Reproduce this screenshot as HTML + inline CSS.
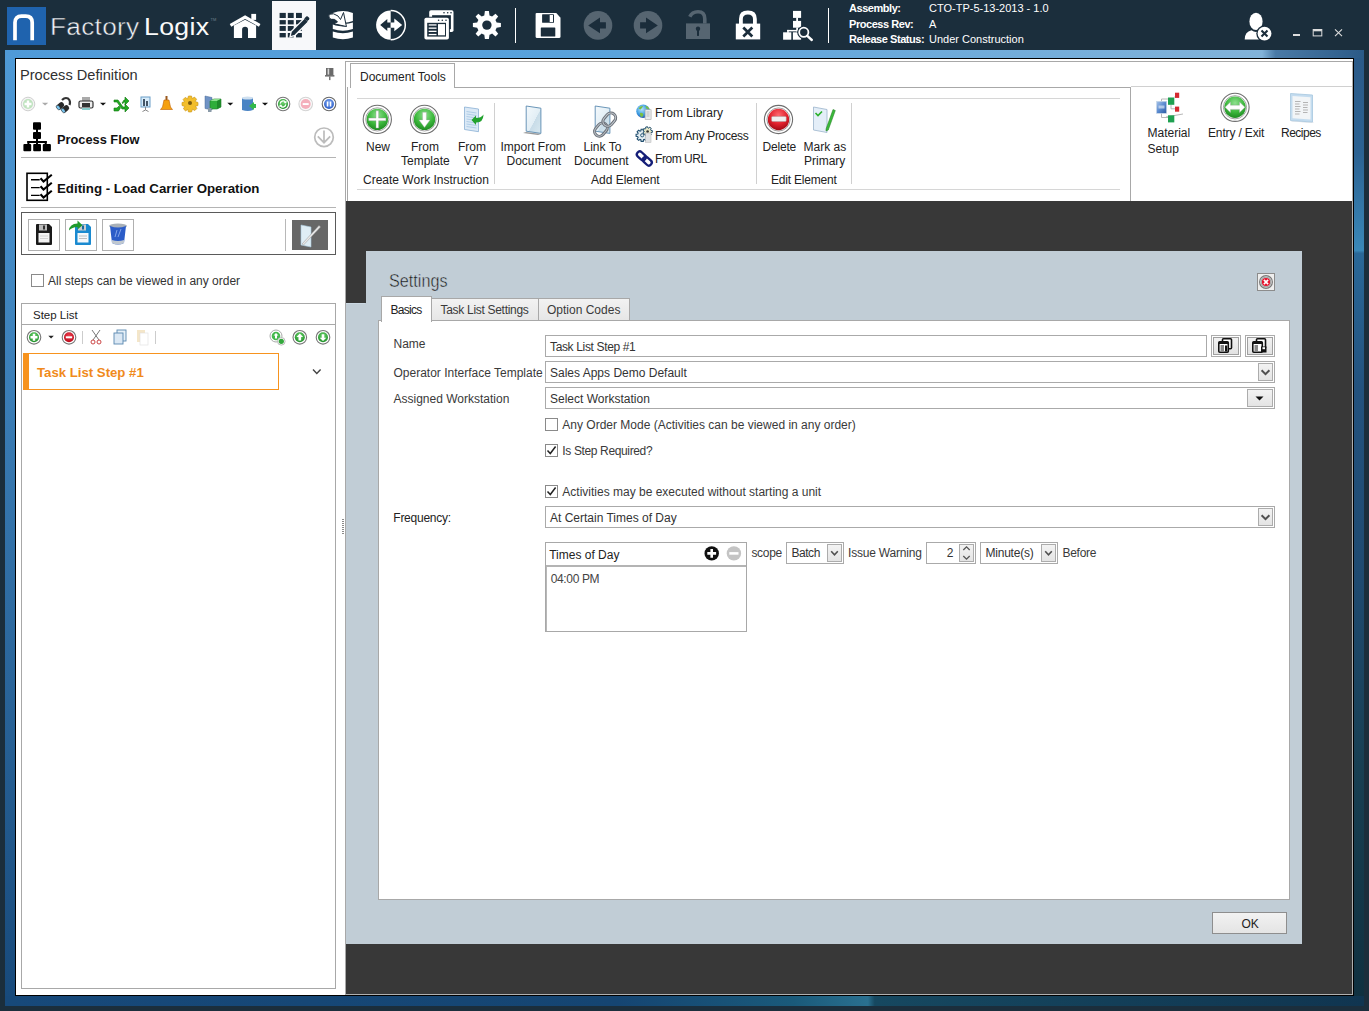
<!DOCTYPE html>
<html><head><meta charset="utf-8">
<style>
*{box-sizing:border-box}
html,body{margin:0;padding:0;width:1369px;height:1011px;overflow:hidden;background:#1b2e3c;font-family:"Liberation Sans",sans-serif;position:relative}
.a{position:absolute}
.t{position:absolute;white-space:nowrap;line-height:1}
.hd{color:#fff;font-size:11px}
.hd b{font-weight:700;letter-spacing:-0.45px}
.f12{font-size:12px;color:#333}
.lbl{font-size:12px;color:#3a3a3a}
.box{position:absolute;border:1px solid #aaa;background:#fff}
.cb{position:absolute;width:13px;height:13px;border:1px solid #8a8a8a;background:#fff}
.dd{position:absolute;border:1px solid #acacac;background:linear-gradient(#f3f3f3,#e4e4e4)}
</style></head><body>

<!-- ===== top bar ===== -->
<div class="a" style="left:7px;top:7px;width:39px;height:38px;background:#1f63ae"></div>
<svg class="a" style="left:7px;top:7px" width="39" height="38"><path d="M8 33.2 V15.5 Q8 9.1 14.5 9.1 H18.7 Q25.2 9.1 25.2 15.5 V33.2" fill="none" stroke="#fff" stroke-width="3.7"/></svg>
<div class="t" style="left:50px;top:15.5px;font-size:23px;color:#eef2f4;letter-spacing:0.25px;-webkit-text-stroke:0.45px #1b2d3b;transform:scaleX(1.14);transform-origin:0 0">Factory</div><div class="t" style="left:143.7px;top:15.5px;font-size:23px;color:#fafafa;letter-spacing:0.3px;transform:scaleX(1.16);transform-origin:0 0">Logix</div><div class="t" style="left:210.5px;top:17.5px;font-size:4px;color:#71818c">TM</div>

<div class="a" style="left:272px;top:1px;width:44px;height:49px;background:#f7f8fa"></div>


<!-- ===== top bar icons ===== -->
<svg class="a" style="left:220px;top:0" width="620" height="50" viewBox="220 0 620 50">
 <!-- home -->
 <path d="M233.9 25.5 L245.1 19.8 L256.1 25.5 V38 H248 V29.5 Q248 26.7 245.1 26.7 Q242.1 26.7 242.1 29.5 V38 H233.9z" fill="#fff"/>
 <path d="M230.5 25.3 L245.1 17.2 L259.7 25.3" fill="none" stroke="#fff" stroke-width="3.2" stroke-linejoin="miter"/>
 <rect x="251.3" y="13.9" width="4.8" height="6" fill="#fff"/>
 <!-- grid + pencil -->
 <g fill="#1b2d3b">
  <rect x="279.6" y="12.9" width="6.2" height="5.1"/><rect x="287.8" y="12.9" width="5.9" height="5.1"/><rect x="296" y="12.9" width="5.9" height="5.1"/>
  <rect x="279.6" y="20.1" width="6.2" height="4.3"/><rect x="287.8" y="20.1" width="5.9" height="4.3"/><rect x="296" y="20.1" width="5.9" height="4.3"/>
  <rect x="279.6" y="26" width="6.2" height="4.9"/><rect x="287.8" y="26" width="5.9" height="4.9"/><rect x="296" y="26" width="5.9" height="4.9"/>
  <rect x="279.6" y="33" width="6.2" height="4.4"/><rect x="287.8" y="33" width="5.9" height="4.4"/><rect x="296" y="33" width="5.9" height="4.4"/>
 </g>
 <path d="M290 36.8 L291.2 31.5 L304.8 17.9 L308.6 21.7 L295 35.3z" fill="#1b2d3b" stroke="#f7f8fa" stroke-width="1.3"/>
 <path d="M304.3 18.4 L306.2 16.5 Q307 15.8 307.8 16.5 L309.1 17.8 Q309.8 18.6 309.1 19.4 L307.2 21.3z" fill="#1b2d3b"/>
 <!-- db with arrow -->
 <path d="M332.8 13 Q342.9 9 352.9 13 V21 Q345 24 340 22 L332.8 14.5z" fill="#fff"/>
 <path d="M332.8 24.5 Q338 26.5 347 26.5 L344.5 24 Q349 23.5 352.9 22.5 V29 Q342.9 32.5 332.8 29z" fill="#fff"/>
 <path d="M332.8 31.5 Q342.9 35 352.9 31.5 V37.5 Q342.9 41 332.8 37.5z" fill="#fff"/>
 <path d="M329 14.3 Q333.5 12.5 338 16 L340.5 19.5 L343.5 12.5 L346.4 26.5 L334 23.8 L337.5 21.8 Q334.5 18.2 331 19.3 Q328 18 329 14.3z" fill="#fff" stroke="#1b2d3b" stroke-width="1"/>
 <!-- circle arrows -->
 <path d="M390.7 10.5 A14.6 14.6 0 0 0 390.7 39.7z" fill="#fff"/>
 <path d="M390.7 10.5 A14.6 14.6 0 0 1 390.7 39.7" fill="none" stroke="#fff" stroke-width="1.5"/>
 <path d="M380.2 25.1 L387.3 19.1 V22.4 H390.7 V27.7 H387.3 V31z" fill="#1b2d3b"/>
 <path d="M402.2 25.1 L394.3 18.5 V22.4 H390.7 V27.7 H394.3 V31.3z" fill="#fff"/>
 <!-- windows -->
 <rect x="429.2" y="10.3" width="24.3" height="21.7" rx="1.8" fill="#fff"/>
 <rect x="432.1" y="15.2" width="18.8" height="14" fill="#1b2d3b"/>
 <g fill="#1b2d3b"><circle cx="444" cy="12.8" r="0.8"/><circle cx="447.7" cy="12.8" r="0.8"/><circle cx="451" cy="12.8" r="0.8"/></g>
 <rect x="423.4" y="16.7" width="26.5" height="23.8" rx="2" fill="#1b2d3b"/>
 <rect x="424.4" y="17.7" width="24.5" height="21.8" rx="1.8" fill="#fff"/>
 <rect x="427.2" y="22.8" width="18.8" height="13.8" fill="#1b2d3b"/>
 <g fill="#1b2d3b"><circle cx="438.6" cy="20.2" r="0.8"/><circle cx="442.3" cy="20.2" r="0.8"/><circle cx="446" cy="20.2" r="0.8"/></g>
 <g fill="#fff"><rect x="428.7" y="24.3" width="7.8" height="1.3"/><rect x="428.7" y="27.5" width="7.8" height="1.3"/><rect x="428.7" y="30.7" width="7.8" height="1.3"/><rect x="428.7" y="33.9" width="7.8" height="1.3"/><rect x="438" y="24.1" width="7" height="11.2"/></g>
 <!-- gear -->
 <g transform="translate(486.9 25.1)">
  <path id="gearP" d="M-2 -14 H2 L2.6 -9.7 A10 10 0 0 1 5.2 -8.5 L8.6 -11.3 L11.3 -8.6 L8.5 -5.2 A10 10 0 0 1 9.7 -2.6 L14 -2 V2 L9.7 2.6 A10 10 0 0 1 8.5 5.2 L11.3 8.6 L8.6 11.3 L5.2 8.5 A10 10 0 0 1 2.6 9.7 L2 14 H-2 L-2.6 9.7 A10 10 0 0 1 -5.2 8.5 L-8.6 11.3 L-11.3 8.6 L-8.5 5.2 A10 10 0 0 1 -9.7 2.6 L-14 2 V-2 L-9.7 -2.6 A10 10 0 0 1 -8.5 -5.2 L-11.3 -8.6 L-8.6 -11.3 L-5.2 -8.5 A10 10 0 0 1 -2.6 -9.7z" fill="#fff"/>
  <circle r="4.7" fill="#1b2d3b"/>
 </g>
 <rect x="515" y="8" width="1" height="35" fill="#fff"/>
 <!-- floppy -->
 <path d="M535.6 14 Q535.6 12.9 536.7 12.9 H556.3 L560.5 17.8 V36.8 Q560.5 37.9 559.4 37.9 H536.7 Q535.6 37.9 535.6 36.8z" fill="#fff"/>
 <rect x="542.1" y="14.2" width="11.9" height="8.6" rx="0.6" fill="#1b2d3b"/>
 <rect x="549.7" y="15" width="3.3" height="7" fill="#fff"/>
 <rect x="540.8" y="27.4" width="14.5" height="9.2" rx="0.6" fill="#1b2d3b"/>
 <!-- back / forward -->
 <circle cx="598" cy="25.4" r="14.3" fill="#566571"/>
 <path d="M588.2 25.4 L600 17.5 V22.3 H605.9 V28.4 H600 V33.3z" fill="#1b2d3b"/>
 <circle cx="648" cy="25.4" r="14.3" fill="#566571"/>
 <path d="M657.8 25.4 L646 17.5 V22.3 H640.1 V28.4 H646 V33.3z" fill="#1b2d3b"/>
 <!-- unlock -->
 <path d="M689.8 16.8 Q692 11.8 698 11.8 Q704.8 11.8 704.8 19 V23.5" fill="none" stroke="#566571" stroke-width="3.6"/>
 <rect x="686" y="23.4" width="24" height="15.6" fill="#566571"/>
 <circle cx="698" cy="28.8" r="2.2" fill="#1b2d3b"/><rect x="697" y="29" width="2" height="6.9" fill="#1b2d3b"/>
 <!-- lock x -->
 <path d="M740.9 24 V19 Q740.9 12.5 747.9 12.5 Q754.9 12.5 754.9 19 V24" fill="none" stroke="#fff" stroke-width="3.8"/>
 <rect x="735.8" y="23.6" width="24.4" height="15.8" fill="#fff"/>
 <path d="M743.3 27.5 L752.3 36.5 M752.3 27.5 L743.3 36.5" stroke="#1b2d3b" stroke-width="2.7"/>
 <!-- hierarchy search -->
 <g fill="#fff">
  <rect x="793" y="10.9" width="8.1" height="7"/><rect x="796.2" y="17.5" width="1.8" height="3.8"/><rect x="793" y="20.9" width="8.1" height="6.8"/>
  <rect x="796.2" y="27.5" width="1.8" height="4"/><rect x="787.2" y="29.9" width="10" height="1.5"/><rect x="787.2" y="29.9" width="1.5" height="3"/>
  <rect x="783.1" y="32.3" width="8.2" height="7.4"/><rect x="792.9" y="32.3" width="8.2" height="7.4"/>
 </g>
 <circle cx="803.8" cy="32.3" r="6.6" fill="#1b2d3b"/>
 <circle cx="803.8" cy="32.3" r="4.6" fill="none" stroke="#fff" stroke-width="1.8"/>
 <path d="M807.3 35.8 L811.8 40" stroke="#fff" stroke-width="2.4" stroke-linecap="round"/>
 <rect x="828" y="8" width="1" height="35" fill="#fff"/>
</svg>
<svg class="a" style="left:1240px;top:8px" width="110" height="36" viewBox="1240 8 110 36">
 <ellipse cx="1256" cy="21.4" rx="6.6" ry="8.7" fill="#fff"/>
 <path d="M1244.7 39.6 Q1244.7 31.8 1251.5 30.3 Q1256 33.5 1260.5 30.3 Q1263 30.8 1265 32 L1262 39.6z" fill="#fff"/>
 <circle cx="1264.5" cy="33.6" r="8.2" fill="#1b2d3b"/>
 <circle cx="1264.5" cy="33.6" r="6.9" fill="#fff"/>
 <path d="M1261.5 30.6l6 6M1267.5 30.6l-6 6" stroke="#1b2d3b" stroke-width="2.1"/>
 <rect x="1293" y="34" width="7" height="2" fill="#ddd"/>
 <rect x="1313.2" y="29.5" width="8.6" height="6.4" fill="none" stroke="#ddd" stroke-width="1"/>
 <rect x="1313.2" y="29.5" width="8.6" height="1.8" fill="#ddd"/>
 <path d="M1335 29.3l7 6.9M1342 29.3l-7 6.9" stroke="#ddd" stroke-width="1.1"/>
</svg>

<!-- header info -->
<div class="t hd" style="left:849px;top:2.7px"><b>Assembly:</b></div>
<div class="t hd" style="left:849px;top:18.8px"><b>Process Rev:</b></div>
<div class="t hd" style="left:849px;top:33.8px"><b>Release Status:</b></div>
<div class="t hd" style="left:929px;top:2.7px">CTO-TP-5-13-2013 - 1.0</div>
<div class="t hd" style="left:929px;top:18.8px">A</div>
<div class="t hd" style="left:929px;top:33.8px">Under Construction</div>

<!-- ===== window frame ===== -->
<div class="a" id="frame" style="left:5px;top:50px;width:1359px;height:956px;background:linear-gradient(#4f9bd8,#17497a)"></div>
<div class="a" style="left:5px;top:50px;width:1359px;height:8px;background:linear-gradient(90deg,#4f9ad8 0%,#5aa3dc 45%,#82b3d9 92.5%,#4a7aa6 93.5%,#2b5a87 100%)"></div>
<div class="a" style="left:1354px;top:58px;width:10px;height:948px;background:linear-gradient(#2b5a88 0%,#2c6292 10%,#3a88b8 20.3%,#2a6898 20.6%,#23527e 35%,#1f4a70 55%,#183f52 75%,#10303f 100%)"></div>
<div class="a" style="left:5px;top:996px;width:1359px;height:10px;background:linear-gradient(90deg,#17497a 0%,#154572 45%,#1a5a7a 58%,#2a7090 63.5%,#164860 64%,#103550 100%)"></div>
<div class="a" style="left:15px;top:58px;width:1339px;height:938px;border:1px solid #000;background:#fff"></div>

<!-- ===== dark workspace ===== -->
<div class="a" style="left:345px;top:61px;width:1px;height:934px;background:#a8a8a8"></div>
<div class="a" style="left:346px;top:201px;width:1007px;height:793px;background:#383838"></div>
<div class="a" style="left:346px;top:994px;width:1007px;height:1px;background:#b0b0b0"></div>
<div class="a" style="left:1352px;top:61px;width:1px;height:934px;background:#b0b0b0"></div>


<!-- ===== left panel ===== -->
<div class="t" style="left:20px;top:68px;font-size:14.6px;color:#303030">Process Definition</div>
<div class="t" style="left:57px;top:134px;font-size:12.8px;font-weight:700;color:#111">Process Flow</div>
<div class="a" style="left:21px;top:157px;width:315px;height:1px;background:#b4b4b4"></div>
<div class="t" style="left:57px;top:181.8px;font-size:13.3px;font-weight:700;color:#111">Editing - Load Carrier Operation</div>
<div class="a" style="left:21px;top:207px;width:315px;height:1px;background:#b4b4b4"></div>
<div class="a" style="left:21px;top:212px;width:315px;height:43px;border:1px solid #5a5a5a"></div>
<div class="a" style="left:28px;top:219px;width:32px;height:32px;border:1px solid #b0b0b0"></div>
<div class="a" style="left:65px;top:219px;width:32px;height:32px;border:1px solid #b0b0b0"></div>
<div class="a" style="left:102px;top:219px;width:32px;height:32px;border:1px solid #b0b0b0"></div>
<div class="a" style="left:285px;top:219px;width:1px;height:32px;background:#b8b8b8"></div>
<div class="a" style="left:292px;top:220px;width:36px;height:30px;background:#676767"></div>
<div class="cb" style="left:31px;top:274px"></div>
<div class="t" style="left:48px;top:275.4px;font-size:12px;color:#333">All steps can be viewed in any order</div>
<div class="a" style="left:21px;top:303px;width:315px;height:686px;border:1px solid #a8a8a8"></div>
<div class="a" style="left:22px;top:324px;width:313px;height:1px;background:#a8a8a8"></div>
<div class="t" style="left:33px;top:309.5px;font-size:11.5px;color:#222">Step List</div>
<div class="a" style="left:82px;top:331px;width:1px;height:13px;background:#ccc"></div>
<div class="a" style="left:155px;top:331px;width:1px;height:13px;background:#ccc"></div>
<div class="a" style="left:23px;top:353px;width:256px;height:37px;border:1px solid #f7931e;border-left:6px solid #f7931e"></div>
<div class="t" style="left:37px;top:366px;font-size:13.2px;font-weight:700;color:#f08a1c">Task List Step #1</div>
<svg class="a" style="left:0;top:0" width="346" height="540">
 <defs>
  <radialGradient id="gG" cx="50%" cy="35%" r="65%"><stop offset="0" stop-color="#6fd66f"/><stop offset="1" stop-color="#1e8f28"/></radialGradient>
  <radialGradient id="rG" cx="50%" cy="35%" r="65%"><stop offset="0" stop-color="#f04050"/><stop offset="1" stop-color="#b80818"/></radialGradient>
  <radialGradient id="bG" cx="50%" cy="35%" r="65%"><stop offset="0" stop-color="#7fa8f0"/><stop offset="1" stop-color="#2a5cc8"/></radialGradient>
 </defs>
 <!-- pin -->
 <rect x="326" y="68" width="7.4" height="7.2" fill="#6a6a6a"/><rect x="327.6" y="68.6" width="1.6" height="6" fill="#d8d8d8"/><rect x="325" y="75.2" width="9.4" height="1.3" fill="#555"/><rect x="329.2" y="76.5" width="1.2" height="3.6" fill="#555"/>
 <!-- toolbar row -->
 <circle cx="28" cy="104" r="6.8" fill="#f4f4f4" stroke="#cfcfcf" stroke-width="1"/>
 <circle cx="28" cy="104" r="5" fill="#bfe3bf"/>
 <path d="M26.8 100.5h2.4v2.3h2.3v2.4h-2.3v2.3h-2.4v-2.3h-2.3v-2.4h2.3z" fill="#fff"/>
 <path d="M42 102.8h6.2l-3.1 2.8z" fill="#aaa"/>
 <g transform="translate(56,97)">
  <path d="M6 3 Q9 0 12 1.5 Q15 4 13.5 8" fill="none" stroke="#333" stroke-width="2.2"/>
  <g transform="rotate(-40 4.5 9)"><rect x="0.5" y="6" width="8" height="5.5" rx="2.5" fill="#2a2a2a"/><ellipse cx="1.8" cy="8.75" rx="1.6" ry="2.6" fill="#7ac4ee" stroke="#222" stroke-width="0.5"/></g>
  <g transform="rotate(-40 9.5 12)"><rect x="5.5" y="9" width="8" height="5.5" rx="2.5" fill="#2a2a2a"/><ellipse cx="6.8" cy="11.75" rx="1.6" ry="2.6" fill="#7ac4ee" stroke="#222" stroke-width="0.5"/></g>
 </g>
 <g transform="translate(79,97)"><rect x="3" y="0" width="8" height="5" fill="#aaa"/><rect x="0" y="4" width="14" height="7" rx="1.5" fill="#eee" stroke="#333" stroke-width="1.2"/><rect x="3" y="6" width="8" height="4" fill="#333"/><rect x="3" y="11" width="8" height="2" fill="#8cc"/></g>
 <path d="M100 102.8h6l-3 2.8z" fill="#111"/>
 <g transform="translate(114,97)"><path d="M0 3h4l5 7h2v-3l4 4-4 4v-3h-3l-5-7h-3z M0 11h3l2-2 1.5 2-2 3h-4.5z M8 6l2-3h1v-3l4 4-4 4v-3h-1l-1 1.5z" fill="#22aa22" stroke="#117711" stroke-width="0.6"/></g>
 <g transform="translate(139,96)"><rect x="2" y="1" width="9" height="10" fill="#d8ecfa" stroke="#6a9ec8" stroke-width="1"/><rect x="4" y="3" width="2" height="7" fill="#456"/><rect x="7" y="5" width="2" height="5" fill="#456"/><path d="M6.5 11v3l-3 1.5M6.5 14l3 1.5" stroke="#888" fill="none"/></g>
 <g transform="translate(161,96)"><rect x="4.5" y="0" width="2" height="4" fill="#9a5a20"/><path d="M3 4h5l1.5 7 2 2.5h-12l2-2.5z" fill="#f5a010" stroke="#c06000" stroke-width="0.6"/></g>
 <g transform="translate(190,104)"><path d="M-1.5-8h3l.7 2.5 2.3-1.4 2.1 2.1-1.4 2.3L8-1.5v3l-2.5.7 1.4 2.3-2.1 2.1-2.3-1.4L1.5 8h-3l-.7-2.5-2.3 1.4-2.1-2.1 1.4-2.3L-8 1.5v-3l2.5-.7-1.4-2.3 2.1-2.1 2.3 1.4z" fill="#f2be2c" stroke="#c89010" stroke-width="0.6"/><circle cx="0" cy="-1" r="2" fill="#7a5a10"/></g>
 <g transform="translate(205,96)"><path d="M0 0 L7 1.5 V14 L0 12.5z" fill="#6f92c4" stroke="#4a6a98" stroke-width="0.5"/><path d="M5 5 L9 3 H16 V11 L12 13 H5z" fill="#2fae3a" stroke="#207a28" stroke-width="0.6"/><path d="M5 5 L9 3 H16 L12 5z" fill="#8fe08f"/><path d="M12 5 V13 L16 11 V3z" fill="#1f8a2a"/><rect x="3" y="12" width="3.5" height="4" fill="#8a9aa8"/></g>
 <path d="M227.3 102.8h6l-3 2.8z" fill="#111"/>
 <g transform="translate(242,96)"><path d="M0 2 Q6 0 11 2 V14 Q6 16 0 14z" fill="#4a84c4"/><ellipse cx="5.5" cy="2" rx="5.5" ry="1.6" fill="#cfe0f0"/><path d="M7 10l5-4v2h2v4h-2v2z" fill="#33b84a"/></g>
 <path d="M262 102.8h6l-3 2.8z" fill="#111"/>
 <circle cx="283" cy="104" r="6.8" fill="#fff" stroke="#777" stroke-width="1.1"/><circle cx="283" cy="104" r="5" fill="url(#gG)"/>
 <path d="M280.2 103.6 A2.9 2.9 0 0 1 285.3 102" fill="none" stroke="#fff" stroke-width="1.3"/><path d="M286.6 100.6 L286.4 103.6 L283.6 102.9z" fill="#fff"/><path d="M285.8 104.4 A2.9 2.9 0 0 1 280.7 106" fill="none" stroke="#fff" stroke-width="1.3"/><path d="M279.4 107.4 L279.6 104.4 L282.4 105.1z" fill="#fff"/>
 <circle cx="305.7" cy="104" r="6.8" fill="#fafafa" stroke="#d4d4d4" stroke-width="1.1"/><circle cx="305.7" cy="104" r="5" fill="#f4b0bc"/><rect x="302.7" y="103.1" width="6" height="1.9" fill="#fff"/>
 <circle cx="329" cy="104" r="6.8" fill="#fff" stroke="#666" stroke-width="1.1"/><circle cx="329" cy="104" r="5" fill="url(#bG)"/><rect x="326.8" y="101.5" width="1.5" height="5" fill="#fff"/><rect x="329.8" y="101.5" width="1.5" height="5" fill="#fff"/>
 <!-- hierarchy -->
 <g fill="#000"><rect x="33" y="122.3" width="8" height="7.5" rx="1"/><rect x="33" y="131.9" width="8" height="7" rx="1"/><rect x="36" y="129" width="2" height="3"/><rect x="36" y="138.5" width="2" height="5.5"/><rect x="27.4" y="141" width="19.3" height="2"/><rect x="27.4" y="141" width="2" height="3"/><rect x="44.7" y="141" width="2" height="3"/><rect x="23.4" y="143.9" width="7.8" height="7.3" rx="1"/><rect x="33.2" y="143.9" width="7.8" height="7.3" rx="1"/><rect x="42.8" y="143.9" width="8.1" height="7.3" rx="1"/></g>
 <!-- down arrow circle -->
 <circle cx="324" cy="137.3" r="9.3" fill="none" stroke="#bcbcbc" stroke-width="1.7"/>
 <path d="M324 130.5v12M317.8 136.3l6.2 6.4 6.2-6.4" fill="none" stroke="#bcbcbc" stroke-width="1.7"/>
 <!-- checklist -->
 <rect x="27" y="173.3" width="20.3" height="27" fill="none" stroke="#000" stroke-width="1.6"/>
 <path d="M31 179.7h8.7M31 187.6h8.7M31 195.4h8.7" stroke="#000" stroke-width="1.4"/>
 <path d="M40.5 178.3l3 3.2 8.3-6.8M40.5 186.3l3 3.2 8.3-6.8M40.5 194.3l3 3.2 8.3-6.8" fill="none" stroke="#000" stroke-width="2.1"/>
 <!-- floppy black -->
 <g transform="translate(36,224)"><path d="M0 1 Q0 0 1 0 H13 L16 3 V20 Q16 21 15 21 H1 Q0 21 0 20z" fill="#1a1a1a"/><rect x="3" y="0.5" width="8" height="6" fill="#bbb"/><rect x="7" y="1.5" width="2" height="4" fill="#333"/><rect x="2.5" y="9" width="11" height="9.5" fill="#f2f2f2"/><path d="M4 12h8M4 14.5h8" stroke="#bbb" stroke-width="0.6"/></g>
 <!-- floppy blue with arrow -->
 <g transform="translate(69,222)"><path d="M6 3 Q6 2 7 2 H19 L22 5 V22 Q22 23 21 23 H7 Q6 23 6 22z" fill="#1a8ad0"/><rect x="9" y="2.5" width="8" height="6" fill="#ccc"/><rect x="13" y="3.5" width="2" height="4" fill="#1a6aa0"/><rect x="8.5" y="11" width="11" height="9.5" fill="#f4f8fb"/><path d="M10 14h8M10 16.5h8" stroke="#999" stroke-width="0.6"/><path d="M0 8.5 Q0.5 1.8 8.5 1.5 V-1.5 L13.5 3.2 8.5 7.5 V5 Q3 5 0 8.5z" fill="#1f9a2c"/></g>
 <!-- trash -->
 <g transform="translate(109,223)"><ellipse cx="9" cy="3" rx="9" ry="2.5" fill="#a8b0b8"/><path d="M1 3 L3 20 Q9 23 15 20 L17 3 Q9 6 1 3z" fill="#2b5cc8"/><path d="M3 17 Q9 19 15 17 L15 20 Q9 23 3 20z" fill="#c0c8d0"/><path d="M8 7 L6 14 M12 6 L9 14" stroke="#9ab8f0" stroke-width="0.8"/></g>
 <!-- doc+pen -->
 <g transform="translate(300,223)"><path d="M1 2 L11 4 V24 L1 22z" fill="#dfeef6" stroke="#a8c8dc" stroke-width="0.6"/><path d="M2 21 L19 2.5 L20.5 4 L3.5 22z" fill="#e8e8e8" stroke="#999" stroke-width="0.5"/></g>
 <!-- step list icons -->
 <circle cx="34" cy="337.3" r="6.8" fill="#fff" stroke="#777" stroke-width="1.1"/><circle cx="34" cy="337.3" r="5" fill="url(#gG)"/><path d="M32.8 333.8h2.4v2.3h2.3v2.4h-2.3v2.3h-2.4v-2.3h-2.3v-2.4h2.3z" fill="#fff"/>
 <path d="M48.3 335.8h5.5l-2.75 2.6z" fill="#222"/>
 <circle cx="69" cy="337.3" r="6.8" fill="#fff" stroke="#777" stroke-width="1.1"/><circle cx="69" cy="337.3" r="5" fill="url(#rG)"/><rect x="65.8" y="336.3" width="6.4" height="2" fill="#fff"/>
 <g transform="translate(91,330)" stroke-width="1"><path d="M1 0 L8 10 M9 0 L2 10" stroke="#777" fill="none"/><circle cx="2" cy="12" r="2" fill="none" stroke="#c44"/><circle cx="8" cy="12" r="2" fill="none" stroke="#c44"/></g>
 <g transform="translate(113,330)"><rect x="4" y="0" width="9" height="11" fill="#e6f0f8" stroke="#5a88b0" stroke-width="0.9"/><rect x="1" y="3" width="9" height="11" fill="#dbe8f4" stroke="#5a88b0" stroke-width="0.9"/></g>
 <g transform="translate(137,329)" opacity="0.45"><rect x="0" y="1" width="8" height="12" fill="#e8c888"/><rect x="3" y="4" width="8" height="12" fill="#fff" stroke="#bbb" stroke-width="0.6"/></g>
 <g transform="translate(270,330)"><circle cx="6" cy="6" r="6" fill="#fff" stroke="#aaa" stroke-width="1"/><circle cx="6" cy="6" r="4.3" fill="#44b84c"/><path d="M6 3l2.5 2.5h-1.5v3h-2v-3h-1.5z" fill="#fff"/><circle cx="11.3" cy="11.3" r="3.8" fill="#fff" stroke="#aaa" stroke-width="0.8"/><circle cx="11.3" cy="11.3" r="2.6" fill="#33a83c"/></g>
 <circle cx="299.8" cy="337.3" r="6.8" fill="#fff" stroke="#777" stroke-width="1.1"/><circle cx="299.8" cy="337.3" r="5" fill="url(#gG)"/><path d="M299.8 333.6l3.3 3.3h-2v3.5h-2.6v-3.5h-2z" fill="#fff"/>
 <circle cx="323" cy="337.3" r="6.8" fill="#fff" stroke="#777" stroke-width="1.1"/><circle cx="323" cy="337.3" r="5" fill="url(#gG)"/><path d="M323 341l3.3-3.3h-2v-3.5h-2.6v3.5h-2z" fill="#fff"/>
 <!-- chevron -->
 <path d="M313 369.5l3.8 4 3.8-4" fill="none" stroke="#444" stroke-width="1.4"/>
 <!-- splitter grip -->
 <g fill="#8a8a8a"><rect x="342" y="519" width="2" height="1"/><rect x="342" y="521" width="2" height="1"/><rect x="342" y="523" width="2" height="1"/><rect x="342" y="525" width="2" height="1"/><rect x="342" y="527" width="2" height="1"/><rect x="342" y="529" width="2" height="1"/><rect x="342" y="531" width="2" height="1"/><rect x="342" y="533" width="2" height="1"/></g>
</svg>

<!-- ===== ribbon ===== -->
<div class="a" style="left:345px;top:61px;width:1008px;height:1px;background:#a8a8a8"></div>
<div class="a" style="left:347px;top:87px;width:784px;height:114px;border:1px solid #a8a8a8;border-bottom:none"></div>
<div class="a" style="left:350px;top:63px;width:105px;height:25px;border:1px solid #a8a8a8;border-bottom:none;background:#fff"></div>
<div class="a" style="left:348px;top:87px;width:2px;height:1px;background:#fff"></div>
<div class="t f12" style="left:360px;top:70.9px;color:#222">Document Tools</div>
<div class="a" style="left:1131px;top:86px;width:221px;height:1px;background:#d0d0d0"></div>
<div class="a" style="left:357px;top:98px;width:763px;height:1px;background:#d6d6d6"></div>
<div class="a" style="left:357px;top:189px;width:763px;height:1px;background:#d6d6d6"></div>
<div class="a" style="left:494px;top:103px;width:1px;height:81px;background:#d0d0d0"></div>
<div class="a" style="left:756px;top:103px;width:1px;height:81px;background:#d0d0d0"></div>
<div class="a" style="left:851px;top:103px;width:1px;height:81px;background:#d0d0d0"></div>
<div class="t f12" style="left:366px;top:140.8px;color:#222">New</div>
<div class="t f12" style="left:411px;top:140.6px;color:#222">From</div>
<div class="t f12" style="left:401px;top:155px;color:#222">Template</div>
<div class="t f12" style="left:458px;top:140.6px;color:#222">From</div>
<div class="t f12" style="left:464px;top:155px;color:#222">V7</div>
<div class="t f12" style="left:363px;top:174.2px;color:#222">Create Work Instruction</div>
<div class="t f12" style="left:500.5px;top:140.6px;color:#222">Import From</div>
<div class="t f12" style="left:506.5px;top:155px;color:#222">Document</div>
<div class="t f12" style="left:583.5px;top:140.6px;color:#222">Link To</div>
<div class="t f12" style="left:574px;top:155px;color:#222">Document</div>
<div class="t f12" style="left:655px;top:106.8px;color:#222">From Library</div>
<div class="t f12" style="left:655px;top:129.6px;color:#222;letter-spacing:-0.28px">From Any Process</div>
<div class="t f12" style="left:655px;top:153.2px;color:#222;letter-spacing:-0.45px">From URL</div>
<div class="t f12" style="left:591px;top:174.2px;color:#222">Add Element</div>
<div class="t f12" style="left:762.5px;top:141.2px;color:#222;letter-spacing:-0.2px">Delete</div>
<div class="t f12" style="left:803.5px;top:141.2px;color:#222">Mark as</div>
<div class="t f12" style="left:804px;top:154.8px;color:#222">Primary</div>
<div class="t f12" style="left:771px;top:174.2px;color:#222;letter-spacing:-0.2px">Edit Element</div>
<div class="t f12" style="left:1147.5px;top:126.8px;color:#222">Material</div>
<div class="t f12" style="left:1147.5px;top:142.6px;color:#222">Setup</div>
<div class="t f12" style="left:1208px;top:126.8px;color:#222;letter-spacing:-0.15px">Entry / Exit</div>
<div class="t f12" style="left:1281px;top:126.8px;color:#222;letter-spacing:-0.5px">Recipes</div>
<svg class="a" style="left:345px;top:88px" width="1000" height="112" viewBox="345 88 1000 112">
 <defs>
  <radialGradient id="gB" cx="50%" cy="30%" r="70%"><stop offset="0" stop-color="#8fe08f"/><stop offset="0.6" stop-color="#3cb83c"/><stop offset="1" stop-color="#1f8a22"/></radialGradient>
  <radialGradient id="rB" cx="50%" cy="30%" r="70%"><stop offset="0" stop-color="#ff6a70"/><stop offset="0.6" stop-color="#e0202c"/><stop offset="1" stop-color="#a00a14"/></radialGradient>
  <linearGradient id="docG" x1="0" y1="0" x2="1" y2="1"><stop offset="0" stop-color="#f4f9fc"/><stop offset="0.55" stop-color="#e2eef5"/><stop offset="0.56" stop-color="#c8dce8"/><stop offset="1" stop-color="#d8e8f0"/></linearGradient>
 </defs>
 <!-- New -->
 <circle cx="377.3" cy="119.4" r="14.1" fill="#fff" stroke="#6e6e6e" stroke-width="1.1"/>
 <circle cx="377.3" cy="119.4" r="11.6" fill="none" stroke="#8a8a8a" stroke-width="0.8"/>
 <circle cx="377.3" cy="119.4" r="10.7" fill="url(#gB)"/>
 <path d="M376 110.8h2.6v7.3h7.3v2.6h-7.3v7.3H376v-7.3h-7.3v-2.6H376z" fill="#fff" stroke="#9a9a9a" stroke-width="0.4"/>
 <!-- From Template -->
 <circle cx="424.5" cy="119.4" r="14.1" fill="#fff" stroke="#6e6e6e" stroke-width="1.1"/>
 <circle cx="424.5" cy="119.4" r="11.6" fill="none" stroke="#8a8a8a" stroke-width="0.8"/>
 <circle cx="424.5" cy="119.4" r="10.7" fill="url(#gB)"/>
 <path d="M422.6 112.3h3.8v7.6h3.6l-5.5 7.5-5.5-7.5h3.6z" fill="#fff" stroke="#aaa" stroke-width="0.4"/>
 <!-- V7 -->
 <path d="M464.5 107 L478.5 109 V131.7 L464.5 129.5z" fill="#dbe9f6" stroke="#8ab0d4" stroke-width="0.8"/>
 <path d="M466.5 111.5l10 1.5M466.5 114l10 1.5M466.5 116.5l10 1.5M466.5 119l10 1.5M466.5 121.5l10 1.5M466.5 124l10 1.5M466.5 126.5l10 1.5" stroke="#9cc0e0" stroke-width="0.7"/>
 <path d="M471.5 120 L476 115.5 V118 Q481 118 483.6 114.5 Q483 123 476 122.5 V125z" fill="#22a22e"/>
 <!-- Import -->
 <path d="M526.2 106 L540.9 108.2 V133.4 L526.2 131.2z" fill="url(#docG)" stroke="#5a8ab0" stroke-width="0.9"/>
 <path d="M526 132 L541 134 L538 135 L523 133z" fill="#555" opacity="0.6"/>
 <!-- Link -->
 <path d="M595.2 106 L609.9 108.2 V133.4 L595.2 131.2z" fill="url(#docG)" stroke="#5a8ab0" stroke-width="0.9"/>
 <g transform="rotate(-50 605.8 123.8)"><rect x="591" y="119" width="14.5" height="9.6" rx="4.8" fill="none" stroke="#6a7078" stroke-width="3"/><rect x="591" y="119" width="14.5" height="9.6" rx="4.8" fill="none" stroke="#b8bec4" stroke-width="1"/><rect x="604" y="119" width="14.5" height="9.6" rx="4.8" fill="none" stroke="#6a7078" stroke-width="3"/><rect x="604" y="119" width="14.5" height="9.6" rx="4.8" fill="none" stroke="#c0c6cc" stroke-width="1"/></g>
 <!-- globe -->
 <defs><radialGradient id="globeG" cx="40%" cy="35%" r="70%"><stop offset="0" stop-color="#b8e4fa"/><stop offset="0.6" stop-color="#3a9ae0"/><stop offset="1" stop-color="#2a4aa0"/></radialGradient></defs>
 <circle cx="643.1" cy="111.3" r="6.8" fill="url(#globeG)"/>
 <path d="M638.5 108.5 Q640 105.5 643 106 Q642 108.5 640.5 109.5z M640 113 Q642.5 112 643.5 114.5 Q643 117 641 117 Q639.5 115.5 640 113z M645.5 105.5 Q648.5 106.5 649.5 109 Q647.5 109.5 646 108z" fill="#7ac040"/>
 <rect x="645.1" y="109.7" width="6" height="9.7" fill="#e8eaec" stroke="#a8a8a8" stroke-width="0.6"/>
 <path d="M646.5 112h3M646.5 114h3M646.5 116h3" stroke="#aaa" stroke-width="0.7"/>
 <!-- gears -->
 <path d="M646.60 133.95 L648.30 134.21 L648.30 136.39 L646.60 136.65 L646.27 137.45 L647.29 138.85 L645.75 140.39 L644.35 139.37 L643.55 139.70 L643.29 141.40 L641.11 141.40 L640.85 139.70 L640.05 139.37 L638.65 140.39 L637.11 138.85 L638.13 137.45 L637.80 136.65 L636.10 136.39 L636.10 134.21 L637.80 133.95 L638.13 133.15 L637.11 131.75 L638.65 130.21 L640.05 131.23 L640.85 130.90 L641.11 129.20 L643.29 129.20 L643.55 130.90 L644.35 131.23 L645.75 130.21 L647.29 131.75 L646.27 133.15z" fill="#e4eef2" stroke="#1f4d6e" stroke-width="1.1"/>
 <circle cx="642.2" cy="135.3" r="1.6" fill="none" stroke="#1f4d6e" stroke-width="0.9"/>
 <path d="M650.90 130.33 L652.30 130.54 L652.30 132.46 L650.90 132.67 L650.57 133.35 L651.28 134.58 L649.78 135.78 L648.74 134.81 L648.01 134.98 L647.49 136.30 L645.61 135.87 L645.72 134.46 L645.14 133.99 L643.78 134.41 L642.95 132.67 L644.12 131.88 L644.12 131.12 L642.95 130.33 L643.78 128.59 L645.14 129.01 L645.72 128.54 L645.61 127.13 L647.49 126.70 L648.01 128.02 L648.74 128.19 L649.78 127.22 L651.28 128.42 L650.57 129.65z" fill="#e8e8c8" stroke="#1f4d6e" stroke-width="1"/>
 <circle cx="647.6" cy="131.5" r="1.3" fill="#333"/>
 <rect x="645.5" y="133" width="5.5" height="9.3" fill="#e0e2e4" stroke="#b0b0b0" stroke-width="0.5"/>
 <!-- url chain -->
 <g transform="rotate(42 644.3 158.5)" fill="none" stroke="#141e78" stroke-width="2.3"><rect x="635.3" y="155.6" width="10" height="5.8" rx="2.9"/><rect x="643.3" y="155.6" width="10" height="5.8" rx="2.9"/></g>
 <!-- Delete -->
 <circle cx="778.5" cy="119.5" r="14.1" fill="#fff" stroke="#6e6e6e" stroke-width="1.1"/>
 <circle cx="778.5" cy="119.5" r="11.6" fill="none" stroke="#8a8a8a" stroke-width="0.8"/>
 <circle cx="778.5" cy="119.5" r="10.7" fill="url(#rB)"/>
 <rect x="771.6" y="116.4" width="14.6" height="5.1" rx="1" fill="#f0f0f0" stroke="#999" stroke-width="0.4"/>
 <!-- Mark as primary -->
 <path d="M813.5 107 L827 109.5 V132.5 L813.5 130z" fill="#e4eef8" stroke="#9ab4cc" stroke-width="0.8"/>
 <path d="M815.5 113 l2.5 2.5 4-4" fill="none" stroke="#2ab02a" stroke-width="1.6"/>
 <path d="M826 129 L833 109.5 L835.3 110.5 L828.3 130 L826 131z" fill="#3ab83a" stroke="#1f7a1f" stroke-width="0.5"/>
 <!-- Material setup -->
 <path d="M1161.5 101 V99 H1168 M1174.3 97 H1176 M1171 104.8 V108.8 H1175 M1161.5 113.3 V117.5 H1168 M1166 117 L1183 114" fill="none" stroke="#b8b8b8" stroke-width="1"/>
 <defs><linearGradient id="mdG" x1="0" y1="0" x2="1" y2="1"><stop offset="0" stop-color="#a8c4e8"/><stop offset="0.5" stop-color="#5a8ad0"/><stop offset="1" stop-color="#2a5aa0"/></linearGradient></defs>
 <rect x="1156.5" y="101.3" width="10.1" height="12" fill="url(#mdG)" stroke="#c8d8e8" stroke-width="0.6"/>
 <rect x="1158.5" y="105.5" width="6" height="3" fill="#d8e4f4" opacity="0.7"/>
 <rect x="1168" y="97.5" width="6.3" height="7.3" fill="#1fa050"/>
 <rect x="1175" y="92.7" width="4.2" height="5.2" fill="#d42a30"/>
 <rect x="1175" y="106.6" width="4.2" height="5.1" fill="#d42a30"/>
 <rect x="1168" y="115.3" width="6.3" height="7.1" fill="#1fa050"/>
 <!-- Entry/Exit -->
 <circle cx="1235" cy="107.3" r="14.1" fill="#fff" stroke="#6e6e6e" stroke-width="1.1"/>
 <circle cx="1235" cy="107.3" r="11.6" fill="none" stroke="#8a8a8a" stroke-width="0.8"/>
 <circle cx="1235" cy="107.3" r="10.7" fill="url(#gB)"/>
 <path d="M1225 107.3 L1230.5 102 V105.2 H1239.5 V102 L1245 107.3 L1239.5 112.6 V109.4 H1230.5 V112.6z" fill="#fff" stroke="#aaa" stroke-width="0.4"/>
 <!-- Recipes -->
 <path d="M1290.5 93.5 L1312.5 95 V122 L1290.5 120.5z" fill="#c4dcef" stroke="#a6c6de" stroke-width="0.8"/>
 <path d="M1292.5 96 L1310.5 97.2 V119.5 L1292.5 118.3z" fill="#f2f5f7"/>
 <path d="M1295 101.5h5.5M1295 104h4.5M1295 106.5h5.5M1295 109h4.5M1295 111.5h5.5M1295 114h4.5M1303 102.5h5M1303 105h5M1303 107.5h4.5M1303 110h5M1303 112.5h4.5" stroke="#b4b4b4" stroke-width="1.2"/>
 <path d="M1291 121 L1313 122.5 L1314 123 L1292 121.5z" fill="#9ab" opacity="0.5"/>
</svg>

<!-- ===== dialog ===== -->
<div class="a" style="left:366px;top:251px;width:936px;height:693px;background:#c1cdd6"></div>
<div class="a" style="left:346px;top:303px;width:20px;height:641px;background:#c1cdd6"></div>
<div class="a" style="left:346px;top:303px;width:19px;height:1px;background:#cbd8e2"></div>
<div class="t" style="left:388.5px;top:273.4px;font-size:17.5px;color:#1a1a1a;-webkit-text-stroke:0.45px #c1cdd6;transform:scaleX(0.925);transform-origin:0 0">Settings</div>
<div class="a" style="left:1257px;top:273px;width:18px;height:18px;border:1px solid #8c8c8c;background:#eeeeee"></div>
<svg class="a" style="left:1257px;top:273px" width="18" height="18"><circle cx="9" cy="9" r="6.4" fill="#f4f4f4" stroke="#7a7a7a" stroke-width="1.2"/><circle cx="9" cy="9" r="4.9" fill="#e0e0e0" stroke="#8a8a8a" stroke-width="0.9"/><circle cx="9" cy="9" r="4.1" fill="#e8102a"/><path d="M6.9 6.9l4.2 4.2M11.1 6.9l-4.2 4.2" stroke="#fff" stroke-width="1.7"/></svg>
<div class="a" style="left:378px;top:320px;width:912px;height:580px;border:1px solid #a8a8a8;background:#fff"></div>
<div class="a" style="left:431px;top:298px;width:108px;height:23px;border:1px solid #a8a8a8;background:linear-gradient(#f2f2f2,#e6e6e6)"></div>
<div class="a" style="left:538px;top:298px;width:92px;height:23px;border:1px solid #a8a8a8;background:linear-gradient(#f2f2f2,#e6e6e6)"></div>
<div class="a" style="left:381px;top:296px;width:51px;height:26px;border:1px solid #a8a8a8;border-bottom:none;background:#fff"></div>
<div class="t lbl" style="left:390.5px;top:304px;color:#222;letter-spacing:-0.7px">Basics</div>
<div class="t lbl" style="left:440.5px;top:304px;letter-spacing:-0.3px">Task List Settings</div>
<div class="t lbl" style="left:547px;top:304px">Option Codes</div>

<div class="t lbl" style="left:393.5px;top:338.2px">Name</div>
<div class="box" style="left:545px;top:335px;width:662px;height:22px"></div>
<div class="t lbl" style="left:550px;top:340.5px;color:#333;letter-spacing:-0.35px">Task List Step #1</div>
<div class="a" style="left:1211px;top:335px;width:30px;height:22px;border:1px solid #acacac;background:#fff"></div>
<div class="a" style="left:1213px;top:337px;width:26px;height:18px;border:1px solid #a0a0a0;background:linear-gradient(#f2f2f2,#e2e2e2)"></div>
<div class="a" style="left:1245px;top:335px;width:30px;height:22px;border:1px solid #acacac;background:#fff"></div>
<div class="a" style="left:1247px;top:337px;width:26px;height:18px;border:1px solid #a0a0a0;background:linear-gradient(#f2f2f2,#e2e2e2)"></div>
<svg class="a" style="left:1211px;top:335px" width="64" height="22">
 <g transform="translate(7,3)"><rect x="4.5" y="0.8" width="9" height="10" rx="1" fill="#fff" stroke="#111" stroke-width="1.6"/><rect x="0.8" y="3.8" width="9.5" height="10.5" rx="1" fill="#fff" stroke="#111" stroke-width="1.6"/><rect x="0.8" y="3.8" width="9.5" height="2.2" fill="#111"/><path d="M2.5 8h3.5M2.5 10h3.5M2.5 12h3.5" stroke="#111" stroke-width="1"/><rect x="7" y="7.5" width="2.2" height="6" fill="#111"/></g>
 <g transform="translate(41,3)"><rect x="4.5" y="0.8" width="9" height="10" rx="1" fill="#fff" stroke="#111" stroke-width="1.6"/><rect x="0.8" y="3.8" width="9.5" height="10.5" rx="1" fill="#fff" stroke="#111" stroke-width="1.6"/><rect x="0.8" y="3.8" width="9.5" height="2.2" fill="#111"/><path d="M2.5 8h3.5M2.5 10h3.5M2.5 12h3.5" stroke="#111" stroke-width="1"/><rect x="9" y="8.5" width="5.5" height="6" fill="#111"/><rect x="10.5" y="9.2" width="2.5" height="2" fill="#fff"/></g>
</svg>

<div class="t lbl" style="left:393.5px;top:366.7px">Operator Interface Template</div>
<div class="box" style="left:545px;top:361px;width:730px;height:22px"></div>
<div class="dd" style="left:1258px;top:363px;width:15px;height:18px"></div>
<svg class="a" style="left:1258px;top:363px" width="15" height="18"><path d="M3.6 7.2l3.9 3.9 3.9-3.9" fill="none" stroke="#505050" stroke-width="2"/></svg>
<div class="t lbl" style="left:550px;top:366.8px;color:#333">Sales Apps Demo Default</div>

<div class="t lbl" style="left:393.5px;top:393.2px">Assigned Workstation</div>
<div class="box" style="left:545px;top:387px;width:730px;height:22px"></div>
<div class="dd" style="left:1247px;top:389px;width:26px;height:18px"></div>
<svg class="a" style="left:1247px;top:389px" width="26" height="18"><path d="M8.5 7.5h8l-4 4z" fill="#111"/></svg>
<div class="t lbl" style="left:550px;top:393px;color:#333">Select Workstation</div>

<div class="cb" style="left:545px;top:418px"></div>
<div class="t lbl" style="left:562.3px;top:418.8px">Any Order Mode (Activities can be viewed in any order)</div>
<div class="cb" style="left:545px;top:444px"></div>
<svg class="a" style="left:545px;top:444px" width="13" height="13"><path d="M2.5 6.5l2.8 3 5.3-7" fill="none" stroke="#222" stroke-width="1.5"/></svg>
<div class="t lbl" style="left:562.3px;top:444.5px;letter-spacing:-0.36px">Is Step Required?</div>
<div class="cb" style="left:545px;top:485px"></div>
<svg class="a" style="left:545px;top:485px" width="13" height="13"><path d="M2.5 6.5l2.8 3 5.3-7" fill="none" stroke="#222" stroke-width="1.5"/></svg>
<div class="t lbl" style="left:562.3px;top:486.2px">Activities may be executed without starting a unit</div>

<div class="t lbl" style="left:393.3px;top:512px;color:#222;letter-spacing:-0.25px">Frequency:</div>
<div class="box" style="left:545px;top:506px;width:730px;height:22px"></div>
<div class="dd" style="left:1258px;top:508px;width:15px;height:18px"></div>
<svg class="a" style="left:1258px;top:508px" width="15" height="18"><path d="M3.6 7.2l3.9 3.9 3.9-3.9" fill="none" stroke="#505050" stroke-width="2"/></svg>
<div class="t lbl" style="left:550px;top:511.8px;color:#333">At Certain Times of Day</div>

<div class="a" style="left:545px;top:542px;width:202px;height:90px;border:1px solid #a8a8a8;background:#fff"></div>
<div class="a" style="left:546px;top:565px;width:200px;height:2px;background:#b4b4b4"></div>
<div class="a" style="left:546px;top:567px;width:1px;height:64px;background:#b8b8b8"></div>
<div class="t lbl" style="left:549.2px;top:548.6px;color:#222">Times of Day</div>
<svg class="a" style="left:700px;top:545px" width="46" height="18">
 <circle cx="11.7" cy="8.4" r="7.2" fill="#111"/><path d="M10.4 4h2.6v3.1h3.1v2.6h-3.1v3.1h-2.6v-3.1H7.3V7.1h3.1z" fill="#fff"/>
 <circle cx="33.9" cy="8.4" r="7.2" fill="#c4c4c4"/><rect x="29.3" y="7.1" width="9.2" height="2.6" fill="#fff"/>
</svg>
<div class="t lbl" style="left:550.7px;top:572.7px;color:#444;letter-spacing:-0.35px">04:00 PM</div>

<div class="t lbl" style="left:751.4px;top:547.2px;letter-spacing:-0.3px">scope</div>
<div class="box" style="left:786px;top:542px;width:58px;height:22px"></div>
<div class="dd" style="left:827px;top:544px;width:15px;height:18px"></div>
<svg class="a" style="left:827px;top:544px" width="15" height="18"><path d="M4.2 7.3l3.3 3.5 3.3-3.5" fill="none" stroke="#505050" stroke-width="1.6"/></svg>
<div class="t lbl" style="left:791.4px;top:547.2px;color:#333;letter-spacing:-0.44px">Batch</div>
<div class="t lbl" style="left:848px;top:547.2px;letter-spacing:-0.2px">Issue Warning</div>
<div class="box" style="left:926px;top:542px;width:50px;height:22px"></div>
<div class="dd" style="left:959px;top:544px;width:15px;height:18px"></div>
<svg class="a" style="left:959px;top:544px" width="15" height="18"><path d="M4.3 6l3.2-3.2 3.2 3.2M4.3 12l3.2 3.2 3.2-3.2" fill="none" stroke="#555" stroke-width="1.3"/></svg>
<div class="t lbl" style="left:946.8px;top:547.2px;color:#333">2</div>
<div class="box" style="left:980px;top:542px;width:78px;height:22px"></div>
<div class="dd" style="left:1041px;top:544px;width:15px;height:18px"></div>
<svg class="a" style="left:1041px;top:544px" width="15" height="18"><path d="M4.2 7.3l3.3 3.5 3.3-3.5" fill="none" stroke="#505050" stroke-width="1.6"/></svg>
<div class="t lbl" style="left:985.4px;top:547.2px;color:#333;letter-spacing:-0.2px">Minute(s)</div>
<div class="t lbl" style="left:1062.4px;top:547.2px;letter-spacing:-0.25px">Before</div>

<div class="a" style="left:1212px;top:912px;width:75px;height:22px;border:1px solid #8e8e8e;background:linear-gradient(#f2f2f2,#e4e4e4)"></div>
<div class="t lbl" style="left:1241.5px;top:918.3px;color:#222">OK</div>

</body></html>
